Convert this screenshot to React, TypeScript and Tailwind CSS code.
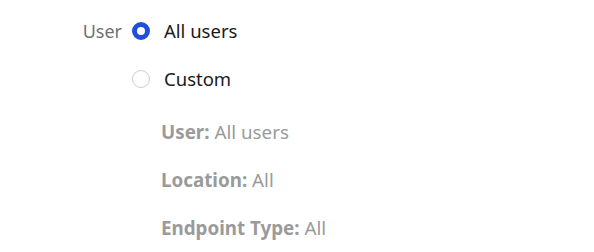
import { useState } from 'react';

const options = [
  { id: 'all', label: 'All users' },
  { id: 'custom', label: 'Custom' },
];

const summary = [
  { key: 'User', value: 'All users' },
  { key: 'Location', value: 'All' },
  { key: 'Endpoint Type', value: 'All' },
];

function Radio({ checked }: { checked: boolean }) {
  return checked ? (
    <span className="box-border h-[18px] w-[18px] shrink-0 rounded-full border-[5px] border-[#1f4fdc] bg-white" />
  ) : (
    <span className="box-border h-[18px] w-[18px] shrink-0 rounded-full border-[1.5px] border-[#cfcfcf] bg-white" />
  );
}

export default function App() {
  const [value, setValue] = useState('all');

  return (
    <div className="min-h-[252px] w-[594px] bg-white pt-[19px] font-['Noto_Sans',sans-serif] text-[18.5px]">
      <div className="flex">
        <div className="w-[122px] text-right text-[18px] leading-[24px] text-[#707070]">User</div>
        <div className="ml-[10px] flex flex-col">
          <div className="flex flex-col gap-[24px]">
            {options.map((o) => (
              <label
                key={o.id}
                className="flex h-[24px] cursor-pointer items-center gap-[14px] text-[#1a1a1a]"
                onClick={() => setValue(o.id)}
              >
                <Radio checked={value === o.id} />
                <span className="leading-[24px]">{o.label}</span>
              </label>
            ))}
          </div>

          {/* Summary */}
          <div className="ml-[29px] mt-[29px] flex flex-col gap-[24px] text-[18.8px] text-[#9a9a9a]">
            {summary.map((s) => (
              <div key={s.key} className="h-[24px] leading-[24px]">
                <span className="font-bold">{s.key}:</span> {s.value}
              </div>
            ))}
          </div>
        </div>
      </div>
    </div>
  );
}
